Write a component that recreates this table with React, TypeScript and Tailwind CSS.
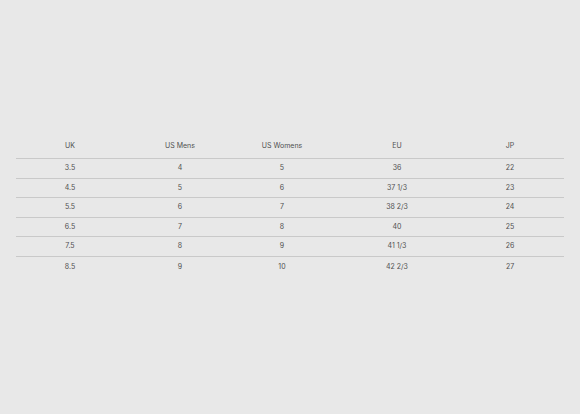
const headers = ["UK", "US Mens", "US Womens", "EU", "JP"];

const rows = [
  ["3.5", "4", "5", "36", "22"],
  ["4.5", "5", "6", "37 1/3", "23"],
  ["5.5", "6", "7", "38 2/3", "24"],
  ["6.5", "7", "8", "40", "25"],
  ["7.5", "8", "9", "41 1/3", "26"],
  ["8.5", "9", "10", "42 2/3", "27"],
];

const cols = "grid grid-cols-[108px_112px_92px_138px_88px_10px]";

export default function App() {
  return (
    <div
      className="min-h-[414px] w-full bg-[#e8e8e8] px-4 pt-[135px] text-[7px] text-[#505050]"
      style={{ fontFamily: "Inter, 'Liberation Sans', sans-serif" }}
    >
      <div className="w-full">
        <div className={`${cols} h-[24px] items-center border-b border-[#c9c9c9]`}>
          {headers.map((h) => (
            <div key={h} className="text-center">
              {h}
            </div>
          ))}
          <div />
        </div>
        {rows.map((row, i) => (
          <div
            key={i}
            className={`${cols} h-[19.6px] items-center ${
              i < rows.length - 1 ? "border-b border-[#c9c9c9]" : ""
            }`}
          >
            {row.map((cell, j) => (
              <div key={j} className="text-center">
                {cell}
              </div>
            ))}
            <div />
          </div>
        ))}
      </div>
    </div>
  );
}
